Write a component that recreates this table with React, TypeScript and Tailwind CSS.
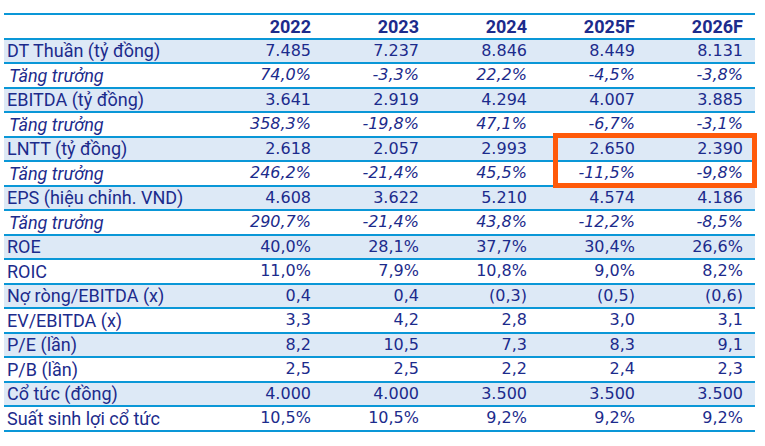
import React from "react";

type Row = { label: string; vals: string[]; italic?: boolean; band?: boolean };

const rows: Row[] = [
  { label: "DT Thuần (tỷ đồng)", vals: ["7.485", "7.237", "8.846", "8.449", "8.131"], band: true },
  { label: "Tăng trưởng", vals: ["74,0%", "-3,3%", "22,2%", "-4,5%", "-3,8%"], italic: true },
  { label: "EBITDA (tỷ đồng)", vals: ["3.641", "2.919", "4.294", "4.007", "3.885"], band: true },
  { label: "Tăng trưởng", vals: ["358,3%", "-19,8%", "47,1%", "-6,7%", "-3,1%"], italic: true },
  { label: "LNTT (tỷ đồng)", vals: ["2.618", "2.057", "2.993", "2.650", "2.390"], band: true },
  { label: "Tăng trưởng", vals: ["246,2%", "-21,4%", "45,5%", "-11,5%", "-9,8%"], italic: true },
  { label: "EPS (hiệu chỉnh. VND)", vals: ["4.608", "3.622", "5.210", "4.574", "4.186"], band: true },
  { label: "Tăng trưởng", vals: ["290,7%", "-21,4%", "43,8%", "-12,2%", "-8,5%"], italic: true },
  { label: "ROE", vals: ["40,0%", "28,1%", "37,7%", "30,4%", "26,6%"], band: true },
  { label: "ROIC", vals: ["11,0%", "7,9%", "10,8%", "9,0%", "8,2%"] },
  { label: "Nợ ròng/EBITDA (x)", vals: ["0,4", "0,4", "(0,3)", "(0,5)", "(0,6)"], band: true },
  { label: "EV/EBITDA (x)", vals: ["3,3", "4,2", "2,8", "3,0", "3,1"] },
  { label: "P/E (lần)", vals: ["8,2", "10,5", "7,3", "8,3", "9,1"], band: true },
  { label: "P/B (lần)", vals: ["2,5", "2,5", "2,2", "2,4", "2,3"] },
  { label: "Cổ tức (đồng)", vals: ["4.000", "4.000", "3.500", "3.500", "3.500"], band: true },
  { label: "Suất sinh lợi cổ tức", vals: ["10,5%", "10,5%", "9,2%", "9,2%", "9,2%"] },
];

const years = ["2022", "2023", "2024", "2025F", "2026F"];

const labelFont = { fontFamily: "Roboto, 'Liberation Sans', sans-serif" };
const numFont = { fontFamily: "'DejaVu Sans', Verdana, sans-serif" };

export default function App() {
  return (
    <div className="w-[765px] h-[446px] bg-white pt-[13px] pl-[4px] text-[#1c2b8c]">
      <div className="relative w-[751px] border-t-2 border-[#0a97d7]">
        <div className="flex h-[24.5px] border-b-2 border-[#0a97d7] bg-white">
          <div className="w-[211px]" />
          {years.map((y) => (
            <div
              key={y}
              className="w-[108px] pr-3 flex items-center justify-end text-[18px] font-bold"
              style={labelFont}
            >
              {y}
            </div>
          ))}
        </div>
        {rows.map((r, i) => (
          <div
            key={i}
            className={`flex h-[24.5px] border-b-2 border-[#0a97d7] ${r.band ? "bg-[#dde9f6]" : "bg-white"}`}
          >
            <div
              className={`w-[211px] flex items-center text-[18px] whitespace-nowrap ${r.italic ? "italic pl-[5px]" : "pl-[3px]"}`}
              style={labelFont}
            >
              {r.label}
            </div>
            {r.vals.map((v, j) => (
              <div
                key={j}
                className={`w-[108px] pr-3 flex items-center justify-end text-[16px] whitespace-nowrap ${r.italic ? "italic" : ""}`}
                style={numFont}
              >
                {v}
              </div>
            ))}
          </div>
        ))}
        <div className="absolute left-[549px] top-[118px] w-[204px] h-[55px] border-[5px] border-[#ff5a0a]" />
      </div>
    </div>
  );
}
